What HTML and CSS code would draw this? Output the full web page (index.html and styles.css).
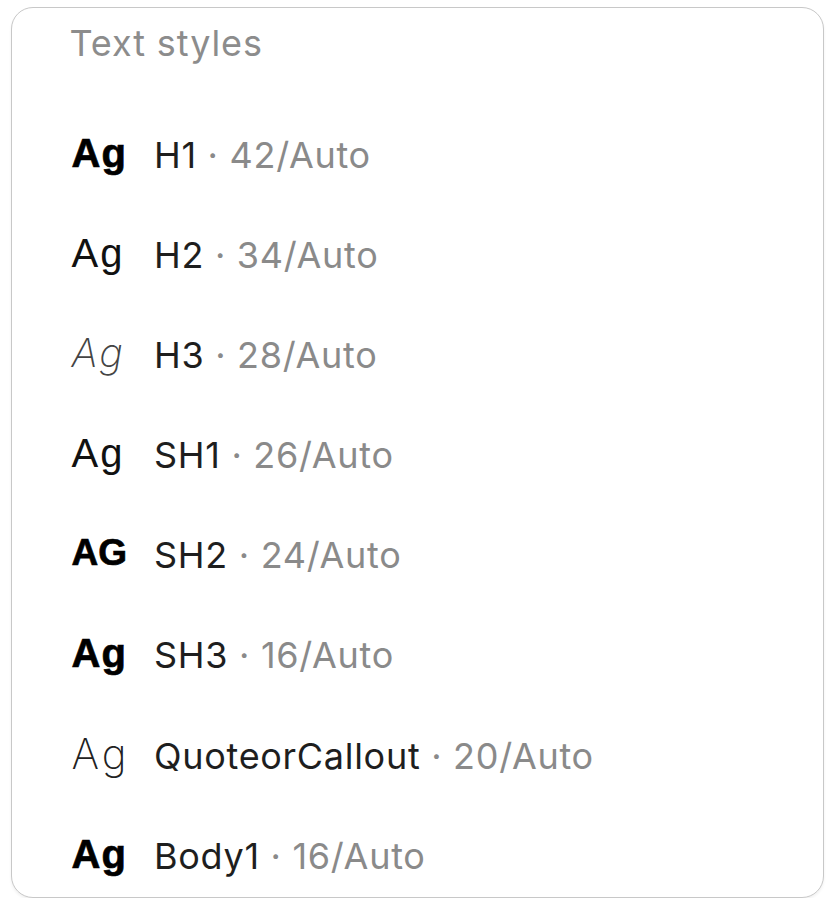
FILE: index.html
```html
<!DOCTYPE html>
<html>
<head>
<meta charset="utf-8">
<link rel="stylesheet" href="styles.css">
</head>
<body>
<div class="card">
  <div class="title">Text styles</div>
  <ul class="list">
    <li class="row"><span class="ag ag-bold">Ag</span><span class="label"><span class="name">H1</span><span class="meta"> · 42/Auto</span></span></li>
    <li class="row"><span class="ag ag-regular">Ag</span><span class="label"><span class="name">H2</span><span class="meta"> · 34/Auto</span></span></li>
    <li class="row"><span class="ag ag-italic">Ag</span><span class="label"><span class="name">H3</span><span class="meta"> · 28/Auto</span></span></li>
    <li class="row"><span class="ag ag-regular">Ag</span><span class="label"><span class="name">SH1</span><span class="meta"> · 26/Auto</span></span></li>
    <li class="row"><span class="ag ag-caps">AG</span><span class="label"><span class="name">SH2</span><span class="meta"> · 24/Auto</span></span></li>
    <li class="row"><span class="ag ag-bold">Ag</span><span class="label"><span class="name">SH3</span><span class="meta"> · 16/Auto</span></span></li>
    <li class="row"><span class="ag ag-light">Ag</span><span class="label"><span class="name">QuoteorCallout</span><span class="meta"> · 20/Auto</span></span></li>
    <li class="row"><span class="ag ag-bold">Ag</span><span class="label"><span class="name">Body1</span><span class="meta"> · 16/Auto</span></span></li>
  </ul>
</div>
</body>
</html>
```
FILE: styles.css
```css
html, body {
  margin: 0;
  padding: 0;
  background: #ffffff;
}
body {
  font-family: Inter, "Noto Sans", sans-serif;
}
.card {
  box-sizing: border-box;
  margin: 7px 0 0 11px;
  width: 813px;
  height: 891px;
  border: 1.5px solid #c8c8c8;
  border-radius: 22px;
  box-shadow: 0 2px 3px rgba(0, 0, 0, 0.06);
  padding: 12.5px 0 0 57.5px;
  overflow: hidden;
  background: #fff;
}
.title {
  font-size: 36px;
  line-height: 44px;
  letter-spacing: 0.9px;
  color: #8c8c8c;
  font-weight: 400;
}
.list {
  list-style: none;
  margin: 60px 0 0 0;
  padding: 0;
  display: flex;
  flex-direction: column;
  gap: 40.2px;
}
.row {
  display: flex;
  align-items: center;
  height: 60px;
}
.ag {
  width: 82.5px;
  margin-left: 2px;
  margin-bottom: 4px;
  font-family: "Liberation Sans", Arial, sans-serif;
  font-size: 40px;
  line-height: 52px;
  letter-spacing: 2px;
  color: #111;
  white-space: nowrap;
}
.ag-bold { font-weight: 700; letter-spacing: 1px; color: #000; -webkit-text-stroke: 0.7px #000; }
.ag-regular { font-weight: 400; }
.ag-italic { font-style: italic; font-family: Inter, sans-serif; font-weight: 200; color: #444; letter-spacing: 2px; }
.ag-caps { font-weight: 700; font-size: 37px; letter-spacing: 0; color: #000; -webkit-text-stroke: 0.7px #000; }
.ag-light { font-family: Inter, sans-serif; font-weight: 200; font-size: 42px; letter-spacing: 3px; color: #222; }
.label {
  font-size: 36px;
  line-height: 44px;
  letter-spacing: 0.7px;
  white-space: nowrap;
}
.name { color: #1e1e1e; }
.meta { color: #8a8a8a; }
```
